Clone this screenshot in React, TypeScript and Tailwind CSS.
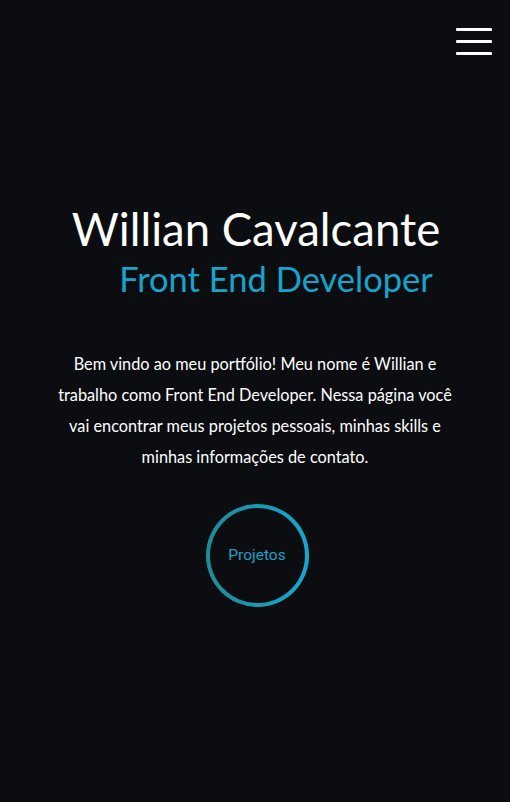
import React from "react";

export default function App() {
  return (
    <div className="min-h-[802px] w-full bg-[#0b0d11] relative" style={{ fontFamily: "Lato, 'Open Sans', sans-serif" }}>
      <button className="absolute right-[18px] top-[28px] flex flex-col gap-[9px] w-[36px]" aria-label="menu">
        <span className="block h-[3px] w-full bg-white rounded-[1px]" />
        <span className="block h-[3px] w-full bg-white rounded-[1px]" />
        <span className="block h-[3px] w-full bg-white rounded-[1px]" />
      </button>
      <div className="flex flex-col items-center pt-[200px]">
        <h1 className="text-white text-[45.5px] leading-[58px] font-normal pl-[2px]">Willian Cavalcante</h1>
        <h2 className="text-[#16a3cc] text-[34.5px] leading-[42px] font-normal pl-[42px]">Front End Developer</h2>
        <p className="mt-[48px] px-[54px] text-center text-white text-[16.3px] leading-[31px]">
          Bem vindo ao meu portfólio! Meu nome é Willian e trabalho como Front End Developer. Nessa página você vai encontrar meus projetos pessoais, minhas skills e minhas informações de contato.
        </p>
        <div className="mt-[32px] ml-[4px] w-[103px] h-[103px] rounded-full p-[4px] bg-gradient-to-r from-[#1e8a96] to-[#15a8d0]">
          <div className="w-full h-full rounded-full bg-[#0b0d11] flex items-center justify-center">
            <span className="text-[#1aa0c4] text-[15.5px]" style={{ fontFamily: "Roboto, sans-serif" }}>Projetos</span>
          </div>
        </div>
      </div>
    </div>
  );
}
